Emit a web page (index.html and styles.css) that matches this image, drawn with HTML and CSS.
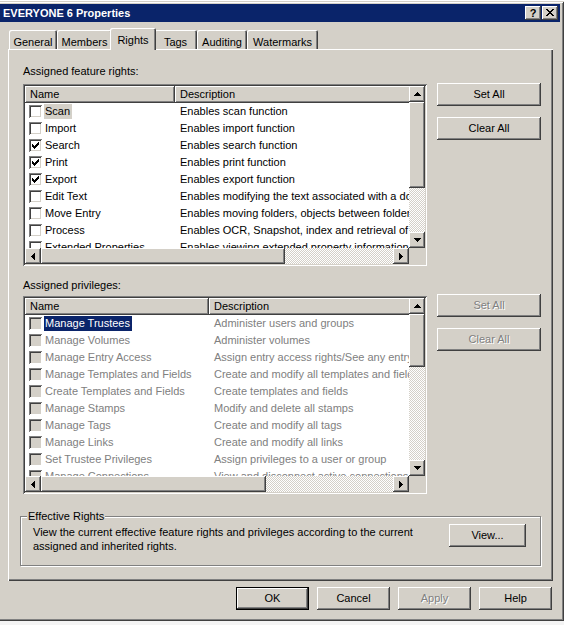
FILE: index.html
```html
<!DOCTYPE html>
<html>
<head>
<meta charset="utf-8">
<title>EVERYONE 6 Properties</title>
<link rel="stylesheet" href="styles.css">
</head>
<body>
<div class="desk"></div>
<div class="window">
  <div class="titlebar">
    <span class="title">EVERYONE 6 Properties</span>
    <div class="caption-btns">
      <span class="cbtn help">?</span>
      <span class="cbtn close"><svg width="8" height="7" viewBox="0 0 8 7"><path d="M0 0h2v1H0zM6 0h2v1H6zM1 1h2v1H1zM5 1h2v1H5zM2 2h4v1H2zM3 3h2v1H3zM2 4h4v1H2zM1 5h2v1H1zM5 5h2v1H5zM0 6h2v1H0zM6 6h2v1H6z"/></svg></span>
    </div>
  </div>
  <div class="client">
    <div class="tabs">
      <div class="tab t-general">General</div>
      <div class="tab t-members">Members</div>
      <div class="tab t-rights active">Rights</div>
      <div class="tab t-tags">Tags</div>
      <div class="tab t-auditing">Auditing</div>
      <div class="tab t-watermarks">Watermarks</div>
    </div>
    <div class="panel">
      <div class="label first">Assigned feature rights:</div>
      <div class="lv-row">
        <div class="lv lv1">
          <div class="lv-body">
            <div class="lv-head"><div class="hcell name">Name</div><div class="hcell desc">Description</div></div>
            <div class="lv-item"><div class="c-name"><span class="chk"></span><span class="txt focus">Scan</span></div><div class="c-desc">Enables scan function</div></div>
            <div class="lv-item"><div class="c-name"><span class="chk"></span><span class="txt">Import</span></div><div class="c-desc">Enables import function</div></div>
            <div class="lv-item"><div class="c-name"><span class="chk checked"><svg width="7" height="7" viewBox="0 0 7 7"><path d="M6 0h1v1H6zM5 1h2v1H5zM0 2h1v1H0zM4 2h3v1H4zM0 3h2v1H0zM3 3h3v1H3zM0 4h5v1H0zM1 5h3v1H1zM2 6h1v1H2z"/></svg></span><span class="txt">Search</span></div><div class="c-desc">Enables search function</div></div>
            <div class="lv-item"><div class="c-name"><span class="chk checked"><svg width="7" height="7" viewBox="0 0 7 7"><path d="M6 0h1v1H6zM5 1h2v1H5zM0 2h1v1H0zM4 2h3v1H4zM0 3h2v1H0zM3 3h3v1H3zM0 4h5v1H0zM1 5h3v1H1zM2 6h1v1H2z"/></svg></span><span class="txt">Print</span></div><div class="c-desc">Enables print function</div></div>
            <div class="lv-item"><div class="c-name"><span class="chk checked"><svg width="7" height="7" viewBox="0 0 7 7"><path d="M6 0h1v1H6zM5 1h2v1H5zM0 2h1v1H0zM4 2h3v1H4zM0 3h2v1H0zM3 3h3v1H3zM0 4h5v1H0zM1 5h3v1H1zM2 6h1v1H2z"/></svg></span><span class="txt">Export</span></div><div class="c-desc">Enables export function</div></div>
            <div class="lv-item"><div class="c-name"><span class="chk"></span><span class="txt">Edit Text</span></div><div class="c-desc">Enables modifying the text associated with a document</div></div>
            <div class="lv-item"><div class="c-name"><span class="chk"></span><span class="txt">Move Entry</span></div><div class="c-desc">Enables moving folders, objects between folders</div></div>
            <div class="lv-item"><div class="c-name"><span class="chk"></span><span class="txt">Process</span></div><div class="c-desc">Enables OCR, Snapshot, index and retrieval of text</div></div>
            <div class="lv-item"><div class="c-name"><span class="chk"></span><span class="txt">Extended Properties</span></div><div class="c-desc">Enables viewing extended property information</div></div>
          </div>
          <div class="vscroll">
            <span class="sb-btn"><svg width="7" height="4" viewBox="0 0 7 4"><path d="M3 0h1v1h1v1h1v1h1v1H0V3h1V2h1V1h1z"/></svg></span>
            <span class="thumb"></span>
            <span class="track"></span>
            <span class="sb-btn"><svg width="7" height="4" viewBox="0 0 7 4"><path d="M0 0h7v1H6v1H5v1H4v1H3V3H2V2H1V1H0z"/></svg></span>
          </div>
          <div class="hscroll">
            <span class="sb-btn"><svg width="4" height="7" viewBox="0 0 4 7"><path d="M3 0h1v7H3V6H2V5H1V4H0V3h1V2h1V1h1z"/></svg></span>
            <span class="thumb"></span>
            <span class="track"></span>
            <span class="sb-btn"><svg width="4" height="7" viewBox="0 0 4 7"><path d="M0 0h1v1h1v1h1v1h1v1H3v1H2v1H1v1H0z"/></svg></span>
          </div>
          <div class="corner"></div>
        </div>
        <div class="side side1">
          <button class="btn">Set All</button>
          <button class="btn">Clear All</button>
        </div>
      </div>

      <div class="label second">Assigned privileges:</div>
      <div class="lv-row">
        <div class="lv lv2">
          <div class="lv-body">
            <div class="lv-head"><div class="hcell name">Name</div><div class="hcell desc">Description</div></div>
            <div class="lv-item"><div class="c-name"><span class="chk"></span><span class="txt sel">Manage Trustees</span></div><div class="c-desc">Administer users and groups</div></div>
            <div class="lv-item"><div class="c-name"><span class="chk"></span><span class="txt">Manage Volumes</span></div><div class="c-desc">Administer volumes</div></div>
            <div class="lv-item"><div class="c-name"><span class="chk"></span><span class="txt">Manage Entry Access</span></div><div class="c-desc">Assign entry access rights/See any entry</div></div>
            <div class="lv-item"><div class="c-name"><span class="chk"></span><span class="txt">Manage Templates and Fields</span></div><div class="c-desc">Create and modify all templates and fields</div></div>
            <div class="lv-item"><div class="c-name"><span class="chk"></span><span class="txt">Create Templates and Fields</span></div><div class="c-desc">Create templates and fields</div></div>
            <div class="lv-item"><div class="c-name"><span class="chk"></span><span class="txt">Manage Stamps</span></div><div class="c-desc">Modify and delete all stamps</div></div>
            <div class="lv-item"><div class="c-name"><span class="chk"></span><span class="txt">Manage Tags</span></div><div class="c-desc">Create and modify all tags</div></div>
            <div class="lv-item"><div class="c-name"><span class="chk"></span><span class="txt">Manage Links</span></div><div class="c-desc">Create and modify all links</div></div>
            <div class="lv-item"><div class="c-name"><span class="chk"></span><span class="txt">Set Trustee Privileges</span></div><div class="c-desc">Assign privileges to a user or group</div></div>
            <div class="lv-item"><div class="c-name"><span class="chk"></span><span class="txt">Manage Connections</span></div><div class="c-desc">View and disconnect active connections</div></div>
          </div>
          <div class="vscroll">
            <span class="sb-btn"><svg width="7" height="4" viewBox="0 0 7 4"><path d="M3 0h1v1h1v1h1v1h1v1H0V3h1V2h1V1h1z"/></svg></span>
            <span class="thumb"></span>
            <span class="track"></span>
            <span class="sb-btn"><svg width="7" height="4" viewBox="0 0 7 4"><path d="M0 0h7v1H6v1H5v1H4v1H3V3H2V2H1V1H0z"/></svg></span>
          </div>
          <div class="hscroll">
            <span class="sb-btn"><svg width="4" height="7" viewBox="0 0 4 7"><path d="M3 0h1v7H3V6H2V5H1V4H0V3h1V2h1V1h1z"/></svg></span>
            <span class="thumb"></span>
            <span class="track"></span>
            <span class="sb-btn"><svg width="4" height="7" viewBox="0 0 4 7"><path d="M0 0h1v1h1v1h1v1h1v1H3v1H2v1H1v1H0z"/></svg></span>
          </div>
          <div class="corner"></div>
        </div>
        <div class="side side2">
          <button class="btn disabled">Set All</button>
          <button class="btn disabled">Clear All</button>
        </div>
      </div>

      <fieldset class="group">
        <legend>Effective Rights</legend>
        <div class="group-row">
          <div class="group-text">View the current effective feature rights and privileges according to the current<br>assigned and inherited rights.</div>
          <button class="btn view-btn">View...</button>
        </div>
      </fieldset>
    </div>
    <div class="footer">
      <button class="btn fbtn default">OK</button>
      <button class="btn fbtn">Cancel</button>
      <button class="btn fbtn disabled">Apply</button>
      <button class="btn fbtn">Help</button>
    </div>
  </div>
</div>
</body>
</html>
```

FILE: styles.css
```css
* { box-sizing: border-box; }
html, body { margin: 0; padding: 0; }
body {
  width: 564px;
  height: 625px;
  overflow: hidden;
  background: #f4f4f4;
  font-family: "Liberation Sans", Arial, sans-serif;
  font-size: 11px;
  line-height: 13px;
  color: #000;
}
.desk { height: 1px; background: #ffffff; }

.window {
  width: 568px;
  height: 620px;
  margin-left: -4px;
  padding: 4px;
  background: #d4d0c8;
  box-shadow: inset 1px 1px #d4d0c8, inset -1px -1px #404040, inset 2px 2px #ffffff, inset -2px -2px #808080;
  display: flex;
  flex-direction: column;
}

.titlebar {
  flex: none;
  height: 18px;
  margin-top: -1px;
  background: #0a246a;
  display: flex;
  align-items: center;
  justify-content: space-between;
  padding: 0 2px 0 3px;
}
.title { color: #fff; font-weight: bold; white-space: nowrap; }
.caption-btns { display: flex; gap: 1px; }
.cbtn {
  width: 16px;
  height: 14px;
  background: #d4d0c8;
  box-shadow: inset -1px -1px #404040, inset 1px 1px #ffffff, inset -2px -2px #808080;
  display: flex;
  align-items: center;
  justify-content: center;
  font-weight: bold;
  font-size: 11px;
  line-height: 14px;
  color: #000;
}
.cbtn svg { display: block; fill: #000; margin: 0 1px 1px 0; }

.client {
  flex: 1;
  display: flex;
  flex-direction: column;
  padding: 6px 7px 7px 8px;
}

.tabs {
  display: flex;
  align-items: flex-end;
  height: 21px;
  padding-left: 1px;
}
.tab {
  flex: none;
  height: 19px;
  padding-top: 6px;
  text-align: center;
  white-space: nowrap;
  background: #d4d0c8;
  border-radius: 2px 2px 0 0;
  box-shadow: inset 1px 1px #ffffff, inset -1px 0 #404040, inset -2px 0 #808080;
}
.t-general { width: 48px; }
.t-members { width: 55px; }
.t-rights { width: 42px; }
.t-tags { width: 43px; }
.t-auditing { width: 50px; }
.t-watermarks { width: 71px; }
.tab.active {
  position: relative;
  z-index: 1;
  height: 22px;
  width: 46px;
  margin: 0 -2px -1px -2px;
  padding-top: 6px;
}

.panel {
  height: 532px;
  background: #d4d0c8;
  box-shadow: inset 1px 1px #ffffff, inset -1px -1px #404040, inset -2px -2px #808080;
  padding: 16px 12px 0 15px;
  display: flex;
  flex-direction: column;
}
.label { height: 13px; white-space: nowrap; }
.label.first { margin-bottom: 6px; }
.label.second { margin-top: 13px; margin-bottom: 4px; }

.lv-row { display: flex; align-items: flex-start; gap: 10px; }
.side { display: flex; flex-direction: column; gap: 11px; width: 104px; }
.side1 { margin-top: -1px; }
.side2 { margin-top: -2px; }

.btn {
  font: inherit;
  line-height: 13px;
  color: #000;
  width: 104px;
  height: 23px;
  padding: 0;
  border: 0;
  background: #d4d0c8;
  box-shadow: inset -1px -1px #404040, inset 1px 1px #ffffff, inset -2px -2px #808080;
}
.btn.disabled { color: #808080; text-shadow: 1px 1px #ffffff; }
.btn.default {
  box-shadow: inset 0 0 0 1px #000000, inset -2px -2px #404040, inset 2px 2px #ffffff, inset -3px -3px #808080;
}

/* list views */
.lv {
  width: 404px;
  padding: 2px;
  background: #ffffff;
  box-shadow: inset 1px 1px #808080, inset -1px -1px #ffffff, inset 2px 2px #404040, inset -2px -2px #d4d0c8;
  display: grid;
  grid-template-columns: 384px 16px;
}
.lv1 { height: 182px; grid-template-rows: 162px 16px; }
.lv2 { height: 198px; grid-template-rows: 178px 16px; }

.lv-body { overflow: hidden; }
.lv-head { display: flex; height: 17px; }
.hcell {
  flex: none;
  height: 17px;
  padding: 2px 0 0 5px;
  white-space: nowrap;
  background: #d4d0c8;
  box-shadow: inset -1px -1px #404040, inset 1px 1px #ffffff, inset -2px -2px #808080;
}
.hcell.desc { width: 320px; }
.lv1 .hcell.name, .lv1 .c-name { width: 150px; }
.lv2 .hcell.name, .lv2 .c-name { width: 184px; }

.lv-item { display: flex; align-items: center; height: 17px; white-space: nowrap; }
.c-name { flex: none; display: flex; align-items: center; overflow: hidden; }
.c-desc { flex: none; padding-left: 5px; }
.chk {
  flex: none;
  width: 13px;
  height: 13px;
  margin-left: 4px;
  padding: 3px;
  background: #ffffff;
  box-shadow: inset 1px 1px #808080, inset -1px -1px #ffffff, inset 2px 2px #404040, inset -2px -2px #d4d0c8;
}
.chk svg { display: block; fill: #000; }
.txt { margin-left: 2px; padding: 1px 2px 1px 1px; }
.txt.focus { background: #d4d0c8; }
.lv2 .lv-item { color: #808080; }
.lv2 .chk { background: #d4d0c8; }
.txt.sel { background: #0a246a; color: #ffffff; }

.vscroll { display: flex; flex-direction: column; }
.hscroll { display: flex; }
.sb-btn {
  flex: none;
  width: 16px;
  height: 16px;
  background: #d4d0c8;
  box-shadow: inset -1px -1px #404040, inset 1px 1px #ffffff, inset -2px -2px #808080;
  display: flex;
  align-items: center;
  justify-content: center;
}
.sb-btn svg { display: block; fill: #000; }
.thumb {
  flex: none;
  background: #d4d0c8;
  box-shadow: inset -1px -1px #404040, inset 1px 1px #ffffff, inset -2px -2px #808080;
}
.vscroll .thumb { height: 86px; }
.lv2 .vscroll .thumb { height: 53px; }
.hscroll .thumb { width: 244px; }
.lv2 .hscroll .thumb { width: 225px; }
.track {
  flex: 1;
  background-image: repeating-conic-gradient(#ffffff 0 25%, #d4d0c8 0 50%);
  background-size: 2px 2px;
}
.corner { background: #d4d0c8; }

/* group box */
.group {
  margin: 16px 0 0 -3px;
  width: 521px;
  min-width: 0;
  padding: 2px 12px 12px 12px;
  border: 1px solid #808080;
  box-shadow: 1px 1px #ffffff, inset 1px 1px #ffffff;
}
.group legend {
  margin-left: -6px;
  padding: 0 1px;
  background: #d4d0c8;
  line-height: 13px;
}
.group-row { display: flex; justify-content: space-between; align-items: flex-start; }
.group-text { line-height: 14px; white-space: nowrap; }
.view-btn { width: 77px; margin: -1px 2px 0 0; }

.footer {
  display: flex;
  justify-content: flex-end;
  gap: 8px;
  margin-top: 6px;
  padding-right: 1px;
}
.fbtn { width: 73px; }
```
